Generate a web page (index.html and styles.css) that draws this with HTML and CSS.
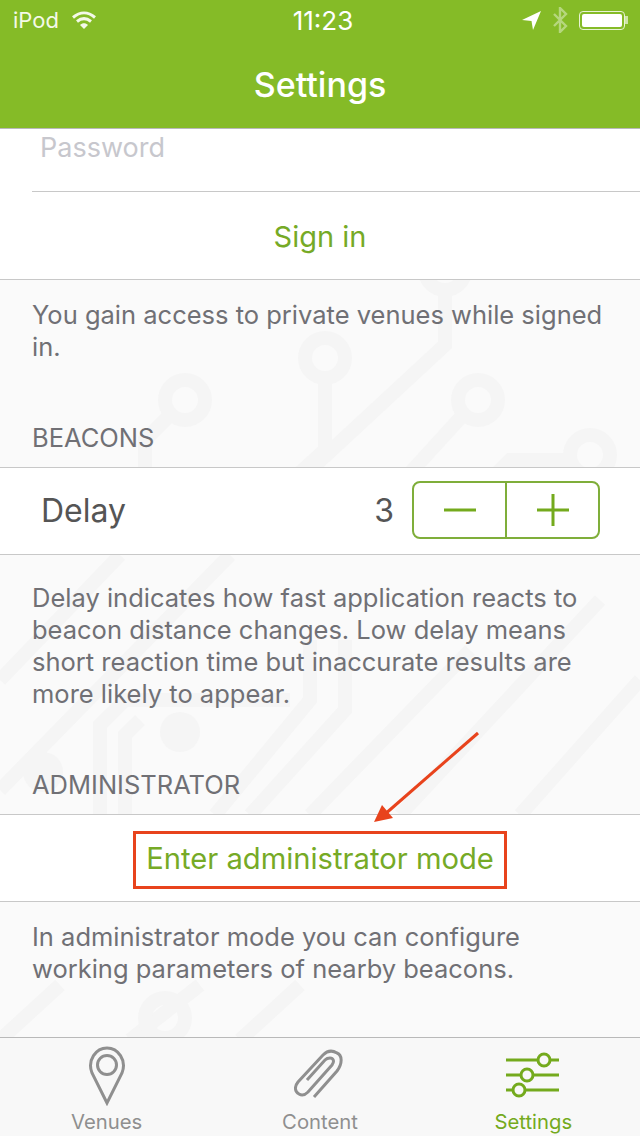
FILE: index.html
```html
<!DOCTYPE html>
<html lang="en">
<head>
  <meta charset="UTF-8">
  <meta name="viewport" content="width=device-width, initial-scale=1.0">
  <title>Settings</title>
  <link rel="stylesheet" href="styles.css">
</head>
<body>

  <div class="screen">
    <!-- Circuit pattern behind the settings -->
    <svg class="pattern" width="640" height="1136" viewBox="0 0 640 1136" fill="none" stroke="#f5f5f5" stroke-width="14">
      <circle cx="445" cy="270" r="20"/>
      <path d="M445 292V345L310 470"/>
      <circle cx="325" cy="358" r="20"/>
      <path d="M325 380V450L270 500"/>
      <circle cx="185" cy="400" r="20"/>
      <path d="M170 415L145 440V480"/>
      <circle cx="478" cy="400" r="20"/>
      <path d="M462 416L340 550"/>
      <circle cx="590" cy="455" r="20"/>
      <path d="M570 460H510L480 490"/>
      <path d="M120 555L0 680M230 555L0 790M470 650L310 815M600 600L400 815M640 680L520 815"/>
      <path d="M100 815V725L125 700H290M125 815V735L140 720M345 640V710L250 815M310 640V700L215 815"/>
      <circle cx="180" cy="732" r="20" fill="#f5f5f5" stroke="none"/>
      <circle cx="43" cy="772" r="20" fill="#f5f5f5" stroke="none"/>
      <path d="M60 985L0 1040M200 985L130 1040M300 985L240 1040"/>
      <circle cx="165" cy="1018" r="20"/>
    </svg>

    <header class="top-bar">
      <div class="status-bar">
        <div class="status-left">
          <span>iPod</span>
          <svg width="26" height="20" viewBox="0 0 26 20">
            <path d="M2 7.5C9 1.5 17 1.5 24 7.5" fill="none" stroke="#f4f9e8" stroke-width="3"/>
            <path d="M6 11.5C10.5 7.8 15.5 7.8 20 11.5" fill="none" stroke="#f4f9e8" stroke-width="3"/>
            <path d="M9 15C11.5 12.6 14.5 12.6 17 15L13 19Z" fill="#f4f9e8"/>
          </svg>
        </div>
        <span class="status-time">11:23</span>
        <div class="status-right">
          <svg width="20" height="20" viewBox="0 0 20 20"><path d="M1 10L20 1L12 20L10.5 11Z" fill="#fff"/></svg>
          <svg width="16" height="26" viewBox="0 0 16 26" fill="none" stroke="#b6d77e" stroke-width="2.4"><path d="M2 7L14 19L8 25V1L14 7L2 19"/></svg>
          <div class="battery"><div class="battery-fill"></div></div>
          <div class="battery-cap"></div>
        </div>
      </div>
      <h1>Settings</h1>
    </header>

    <main class="settings">
      <div class="group">
        <div class="password-row">Password</div>
        <div class="action-row">Sign in</div>
      </div>
      <p class="note">You gain access to private venues while signed in.</p>

      <h2>BEACONS</h2>
      <div class="group delay-row">
        <span class="delay-label">Delay</span>
        <span class="delay-value">3</span>
        <div class="stepper">
          <button class="step"><svg width="32" height="32" viewBox="0 0 32 32"><path d="M0 16H32" stroke="#74aa1d" stroke-width="3"/></svg></button>
          <button class="step"><svg width="32" height="32" viewBox="0 0 32 32"><path d="M0 16H32M16 0V32" stroke="#74aa1d" stroke-width="3"/></svg></button>
        </div>
      </div>
      <p class="note note-delay">Delay indicates how fast application reacts to beacon distance changes. Low delay means short reaction time but inaccurate results are more likely to appear.</p>

      <h2>ADMINISTRATOR</h2>
      <div class="group action-row admin-row">
        <span class="highlight">Enter administrator mode</span>
      </div>
      <p class="note">In administrator mode you can configure working parameters of nearby beacons.</p>
    </main>

    <!-- Red annotation arrow -->
    <svg class="arrow" width="120" height="100" viewBox="0 0 120 100">
      <path d="M106 2L12 84" stroke="#e8431c" stroke-width="3"/>
      <path d="M2 91L10 74L21 87Z" fill="#e8431c"/>
    </svg>

    <nav class="tab-bar">
      <div class="tab">
        <svg width="38" height="60" viewBox="0 0 38 60" fill="none" stroke="#8f8f8f" stroke-width="3">
          <path d="M19 57L4 27C-1 14 8 2 19 2S39 14 34 27Z"/>
          <circle cx="19" cy="19" r="9.5"/>
        </svg>
        <span>Venues</span>
      </div>
      <div class="tab">
        <svg width="52" height="60" viewBox="0 0 52 60" fill="none" stroke="#8f8f8f" stroke-width="3">
          <path d="M20 51L43 25C49 17 48 9 43 7C38 4 33 5 29 9L4 36C0 41 1 46 5 48C8 50 11 49 14 46L38 19C41 15 39 12 36 12C34 12 32 13 31 14L13 34"/>
        </svg>
        <span>Content</span>
      </div>
      <div class="tab tab-active">
        <svg width="56" height="60" viewBox="0 0 56 60" fill="none" stroke="#74aa1d" stroke-width="3">
          <path d="M1 14H32M46 14H54M1 29H15M29 29H54M1 44H7M21 44H54"/>
          <circle cx="39" cy="14" r="6"/>
          <circle cx="22" cy="29" r="6"/>
          <circle cx="14" cy="44" r="6"/>
        </svg>
        <span>Settings</span>
      </div>
    </nav>
  </div>

</body>
</html>
```

FILE: styles.css
```css
body {
  margin: 0;
  font-family: Inter, "Liberation Sans", sans-serif;
  color: #707075;
}
.screen {
  position: relative;
  display: flex;
  flex-direction: column;
  width: 640px;
  height: 1136px;
  overflow: hidden;
  background: #fafafa;
}
.pattern {
  position: absolute;
  top: 0;
  left: 0;
}
.top-bar {
  position: relative;
  height: 128px;
  background: #85bb27;
  color: #fff;
  border-bottom: 1px solid #b9b9b9;
}
.status-bar {
  display: flex;
  justify-content: space-between;
  align-items: center;
  height: 40px;
  padding: 0 12px 0 13px;
  font-size: 22px;
  position: relative;
}
.status-left, .status-right {
  display: flex;
  align-items: center;
}
.status-left {
  gap: 12px;
  color: #f4f9e8;
}
.status-right {
  gap: 11px;
}
.status-time {
  position: absolute;
  left: 0;
  right: -6px;
  text-align: center;
  font-size: 26px;
}
.battery {
  width: 46px;
  height: 19px;
  padding: 2px;
  border: 1.5px solid #e8f3d4;
  border-radius: 4px;
  box-sizing: border-box;
}
.battery-fill {
  height: 100%;
  background: #fff;
  border-radius: 2px;
}
.battery-cap {
  width: 3px;
  height: 8px;
  margin-left: -11px;
  background: #cfe4a8;
}
.top-bar h1 {
  margin: 0;
  height: 88px;
  line-height: 89px;
  text-align: center;
  font-size: 34px;
  font-weight: 500;
}
.settings {
  position: relative;
  flex: 1;
}
.group {
  background: #fff;
  border-bottom: 1px solid #c8c8c8;
}
.password-row {
  margin-left: 32px;
  padding-left: 8px;
  height: 62px;
  line-height: 38px;
  font-size: 27px;
  color: #c7c7cd;
  border-bottom: 1px solid #c8c8c8;
}
.action-row {
  height: 87px;
  line-height: 89px;
  text-align: center;
  font-size: 29px;
  color: #76aa26;
}
.note {
  margin: 0;
  padding: 19px 32px 0;
  font-size: 25.5px;
  line-height: 32px;
}
.note-delay {
  padding-top: 27px;
}
h2 {
  margin: 59px 0 0;
  padding: 0 32px 13px;
  font-size: 25.5px;
  line-height: 32px;
  font-weight: 400;
}
.group.delay-row, .group.admin-row {
  border-top: 1px solid #c8c8c8;
}
.delay-row {
  display: flex;
  align-items: center;
  height: 84px;
  padding: 0 40px 2px 41px;
}
.delay-label {
  flex: 1;
  font-size: 32px;
  color: #555;
}
.delay-value {
  margin-right: 18px;
  font-size: 32px;
  color: #555;
}
.stepper {
  display: flex;
  width: 188px;
  height: 58px;
  box-sizing: border-box;
  border: 2px solid #7fae3a;
  border-radius: 8px;
}
.step {
  flex: 1;
  display: flex;
  align-items: center;
  justify-content: center;
  padding: 0;
  border: none;
  background: none;
}
.step + .step {
  border-left: 2px solid #7fae3a;
}
.admin-row {
  height: 86px;
  line-height: normal;
  display: flex;
  align-items: center;
  justify-content: center;
}
.highlight {
  margin-top: 4px;
  padding: 0 10px;
  height: 58px;
  line-height: 50px;
  font-size: 29.2px;
  box-sizing: border-box;
  border: 3px solid #e8431c;
}
.arrow {
  position: absolute;
  left: 372px;
  top: 731px;
}
.tab-bar {
  position: relative;
  display: flex;
  height: 98px;
  background: #f8f8f8;
  border-top: 1px solid #b9b9b9;
  color: #8f8f8f;
  font-size: 20.3px;
}
.tab {
  flex: 1;
  display: flex;
  flex-direction: column;
  align-items: center;
  padding-top: 8px;
}
.tab svg {
  display: block;
}
.tab span {
  margin-top: 3px;
  line-height: 26px;
}
.tab-active {
  color: #74aa1d;
}
```
